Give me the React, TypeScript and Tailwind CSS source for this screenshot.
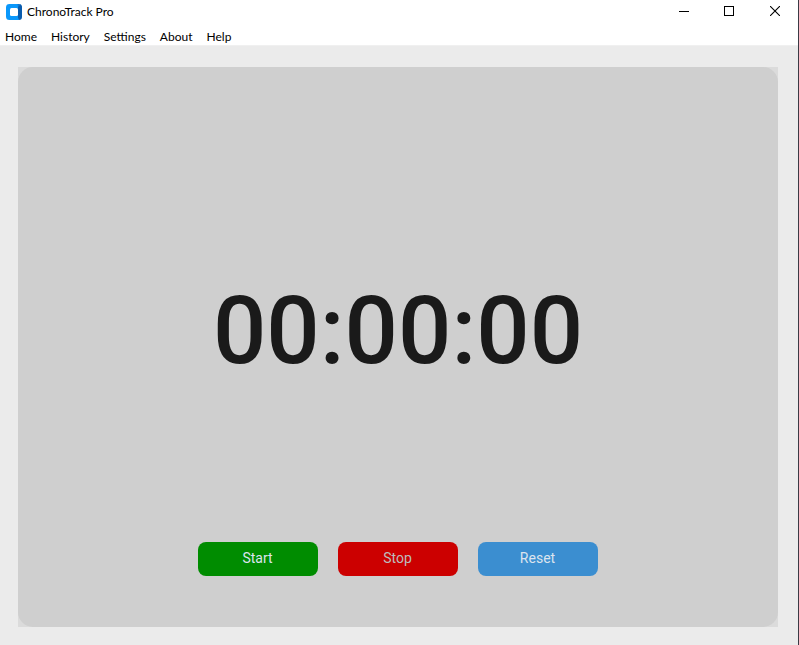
import React from "react";

const menuItems = ["Home", "History", "Settings", "About", "Help"];

const actions = [
  { label: "Start", style: "bg-[#008c00] text-[#dce4ee]" },
  { label: "Stop", style: "bg-[#cc0000] text-[#bdbdbd]" },
  { label: "Reset", style: "bg-[#3b8ed0] text-[#dce4ee]" },
];

function AppLogo() {
  return (
    <svg width="16" height="16" viewBox="0 0 16 16" aria-hidden="true">
      <path d="M3.500 0H13v16H3.500A3.500 3.500 0 0 1 0 12.500v-9A3.500 3.500 0 0 1 3.500 0z" fill="#0a98fb" />
      <path d="M12 2.500L14 0a3 3 0 0 1 2 3v10a3 3 0 0 1-3 3l-1-2.500z" fill="#0a5cad" />
      <path d="M11.500 0H13a3 3 0 0 1 1.500.500L12 3z" fill="#0d78d2" />
      <rect x="4" y="4" width="8" height="8" rx="1.500" fill="#fff" />
    </svg>
  );
}

function TitleBar() {
  return (
    <header className="flex h-6 items-center justify-between pl-1.5">
      <div className="flex items-center gap-[5px]">
        <AppLogo />
        <h1 className="text-[12px] leading-4">ChronoTrack Pro</h1>
      </div>
      <div className="flex h-6">
        <button aria-label="Minimize" className="flex w-11 justify-center pt-1.5">
          <svg width="10" height="10" viewBox="0 0 10 10" shapeRendering="crispEdges">
            <rect y="5" width="10" height="1" />
          </svg>
        </button>
        <button aria-label="Maximize" className="flex w-[46px] justify-center pt-1.5">
          <svg width="10" height="10" viewBox="0 0 10 10" shapeRendering="crispEdges">
            <path d="M.5.5h9v9h-9z" fill="none" stroke="#000" />
          </svg>
        </button>
        <button aria-label="Close" className="flex w-[46px] justify-center pt-1.5">
          <svg width="10" height="10" viewBox="0 0 10 10">
            <path d="M0 0l10 10M10 0L0 10" fill="none" stroke="#000" strokeWidth="1.1" />
          </svg>
        </button>
      </div>
    </header>
  );
}

export default function App() {
  return (
    <div className="flex min-h-screen flex-col border-r border-[#3a3a44] bg-white font-['Lato',sans-serif] text-black">
      <TitleBar />
      <nav className="flex h-[21px] items-center gap-3.5 pt-1 pl-[5px] text-[12px] leading-4">
        {menuItems.map((item) => (
          <button key={item}>{item}</button>
        ))}
      </nav>
      <main className="flex grow flex-col border-t border-[#f0f0f0] bg-[#ebebeb] pt-[21px] pr-5 pb-[18px] pl-[18px]">
        <div className="flex grow bg-[#dbdbdb]">
          <section className="flex grow flex-col items-center rounded-[15px] bg-[#cfcfcf] font-[Roboto,sans-serif]">
            <div className="flex grow items-center pt-[52px]">
              <time className="text-[94px] leading-[112px] font-medium text-[#1a1a1a]">
                00:00:00
              </time>
            </div>
            <div className="flex gap-5 pb-[51px]">
              {actions.map(({ label, style }) => (
                <button
                  key={label}
                  className={`h-[34px] w-[120px] rounded-[8px] pr-px pb-0.5 text-[14px] leading-4 ${style}`}
                >
                  {label}
                </button>
              ))}
            </div>
          </section>
        </div>
      </main>
    </div>
  );
}
